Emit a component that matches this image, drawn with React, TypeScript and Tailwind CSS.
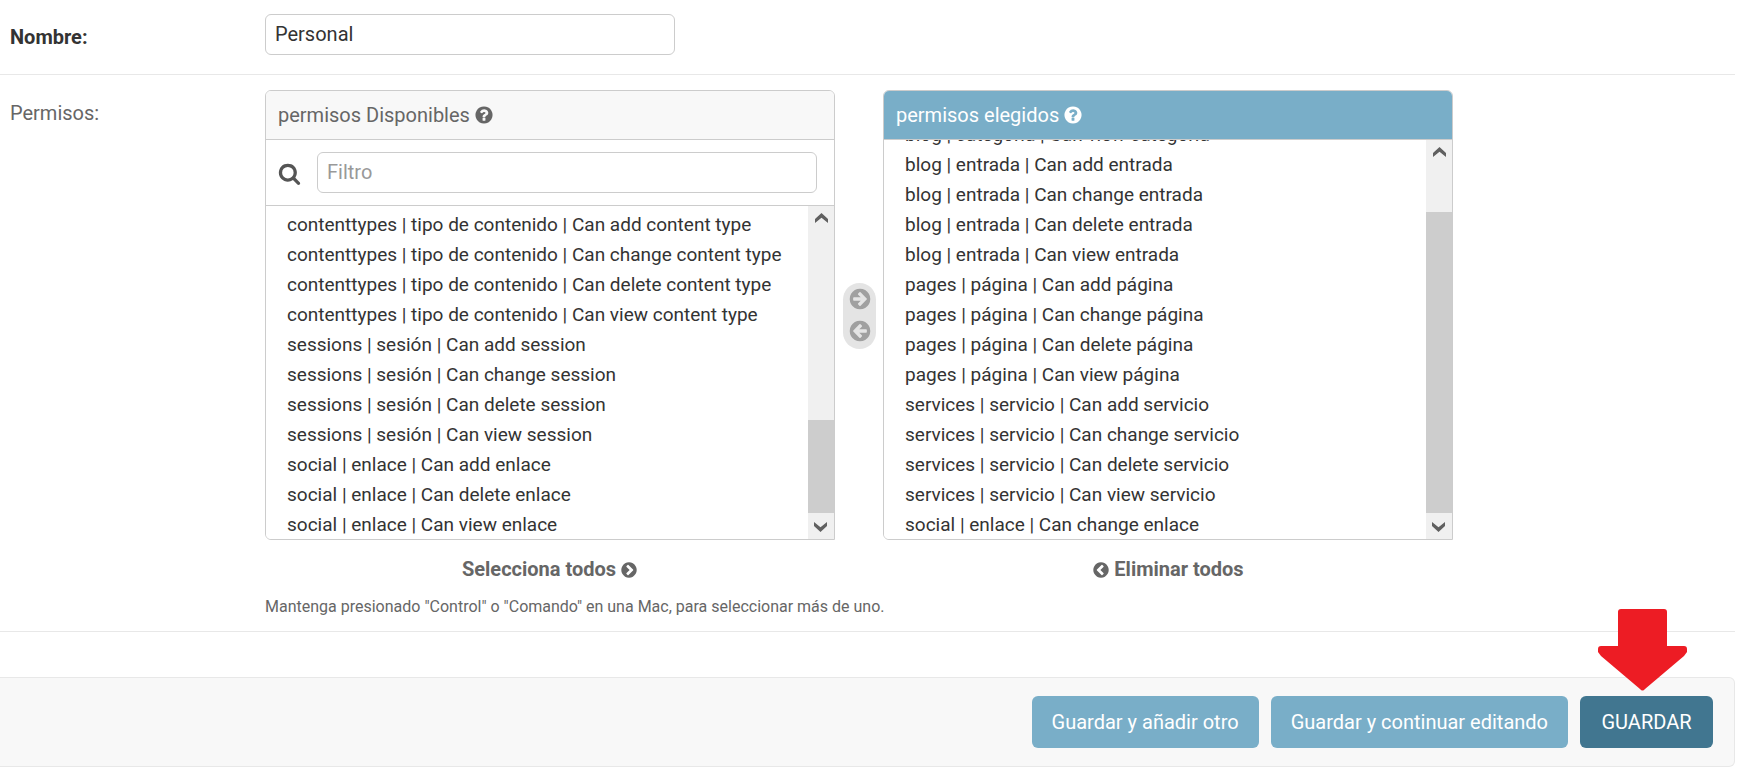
import { useLayoutEffect, useRef } from 'react';

const DISC =
  'q0 209-103 385.5t-279.5 279.5-385.5 103-385.5-103-279.5-279.5-103-385.5 103-385.5 279.5-279.5 385.5-103 385.5 103 279.5 279.5 103 385.5z';

const PATHS = {
  help:
    'M1024 1376v-192q0-14-9-23t-23-9h-192q-14 0-23 9t-9 23v192q0 14 9 23t23 9h192q14 0 23-9t9-23zm256-672q0-88-55.5-163t-138.5-116-170-41q-243 0-371 213-15 24 8 42l132 100q7 6 19 6 16 0 25-12 53-68 86-92 34-24 86-24 48 0 85.5 26t37.5 59q0 38-20 61t-68 45q-63 28-115.5 86.5t-52.5 125.5v36q0 14 9 23t23 9h192q14 0 23-9t9-23q0-19 21.5-49.5t54.5-49.5q32-18 49-28.5t46-35 44.5-48 28-60.5 12.5-81zm384 192' +
    DISC,
  chevron:
    'M845 1395l454-454q19-19 19-45t-19-45l-454-454q-19-19-45-19t-45 19l-102 102q-19 19-19 45t19 45l307 307-307 307q-19 19-19 45t19 45l102 102q19 19 45 19t45-19zm819-499' +
    DISC,
  arrow:
    'M1413 896q0-27-18-45l-91-91-362-362q-18-18-45-18t-45 18l-91 91q-18 18-18 45t18 45l189 189h-502q-26 0-45 19t-19 45v128q0 26 19 45t45 19h502l-189 189q-19 19-19 45t19 45l91 91q18 18 45 18t45-18l362-362 91-91q18-18 18-45zm251 0' +
    DISC,
  search:
    'M1216 832q0-185-131.5-316.5t-316.5-131.5-316.5 131.5-131.5 316.5 131.5 316.5 316.5 131.5 316.5-131.5 131.5-316.5zm512 832q0 52-38 90t-90 38q-54 0-90-38l-343-342q-179 124-399 124-143 0-273.5-55.5t-225-150-150-225-55.5-273.5 55.5-273.5 150-225 225-150 273.5-55.5 273.5 55.5 225 150 150 225 55.5 273.5q0 220-124 399l343 343q37 37 37 90z',
};

function Icon({ name, className }: { name: keyof typeof PATHS; className: string }) {
  return (
    <svg viewBox="0 0 1792 1792" fill="currentColor" aria-hidden="true" className={className}>
      <path d={PATHS[name]} />
    </svg>
  );
}

const available = [
  'contenttypes | tipo de contenido | Can add content type',
  'contenttypes | tipo de contenido | Can change content type',
  'contenttypes | tipo de contenido | Can delete content type',
  'contenttypes | tipo de contenido | Can view content type',
  'sessions | sesión | Can add session',
  'sessions | sesión | Can change session',
  'sessions | sesión | Can delete session',
  'sessions | sesión | Can view session',
  'social | enlace | Can add enlace',
  'social | enlace | Can delete enlace',
  'social | enlace | Can view enlace',
];

const chosen = [
  'blog | categoría | Can view categoría',
  'blog | entrada | Can add entrada',
  'blog | entrada | Can change entrada',
  'blog | entrada | Can delete entrada',
  'blog | entrada | Can view entrada',
  'pages | página | Can add página',
  'pages | página | Can change página',
  'pages | página | Can delete página',
  'pages | página | Can view página',
  'services | servicio | Can add servicio',
  'services | servicio | Can change servicio',
  'services | servicio | Can delete servicio',
  'services | servicio | Can view servicio',
  'social | enlace | Can change enlace',
];

function ScrollChevron({ className }: { className?: string }) {
  return (
    <div className={`flex h-[26px] shrink-0 items-center justify-center pb-0.5 ${className ?? ''}`}>
      <svg viewBox="0 0 13 10" fill="#606060" className="h-2.5 w-[13px]" aria-hidden="true">
        <path d="M0 6 6.500 0 13 6V10L6.500 4.700 0 10Z" />
      </svg>
    </div>
  );
}

function OptionList({ label, items, thumb }: { label: string; items: string[]; thumb: string }) {
  const ref = useRef<HTMLSelectElement>(null);
  useLayoutEffect(() => {
    if (ref.current) ref.current.scrollTop = ref.current.scrollHeight;
  }, []);
  return (
    <div className="flex min-h-0 flex-1 items-stretch">
      <select
        ref={ref}
        multiple
        aria-label={label}
        className="block min-w-0 flex-1 appearance-none overflow-y-auto border-0 bg-white p-0 pt-[3px] text-[19px] text-[#333] outline-none [scrollbar-width:none]"
      >
        {items.map((item) => (
          <option key={item} className="block h-[30px] min-h-[30px] px-[21px] pt-1 pb-0">
            {item}
          </option>
        ))}
      </select>
      <div className="flex w-[26px] shrink-0 flex-col bg-[#f0f0f0]">
        <ScrollChevron />
        <div className="flex flex-1 flex-col justify-end">
          <div className={`bg-[#cdcdcd] ${thumb}`} />
        </div>
        <ScrollChevron className="rotate-180" />
      </div>
    </div>
  );
}

const panel = 'flex h-[450px] flex-col overflow-hidden rounded-t-md rounded-bl-md border border-[#ccc]';
const heading = 'flex h-[49px] shrink-0 items-center gap-1 border-b border-[#ccc] px-3 text-[20px]';
const field =
  'h-[41px] rounded-md border border-[#ccc] bg-white px-[9px] pb-0.5 text-[20px] text-[#333] outline-none placeholder:text-[#999]';
const bulk = 'mt-4 flex h-[26px] items-center gap-1 self-center text-[20px] font-bold text-[#666]';
const button = 'h-[52px] min-w-[133px] rounded-md px-5 text-[20px] text-white';

export default function App() {
  return (
    <form className="bg-white pr-[21px] font-['Roboto',sans-serif] text-[20px] text-[#333]" onSubmit={(e) => e.preventDefault()}>
      <div className="flex items-start border-b border-[#e8e8e8] pt-3.5 pb-[19px] pl-2.5">
        <label htmlFor="nombre" className="w-[255px] shrink-0 pt-2 leading-[30px] font-bold">
          Nombre:
        </label>
        <input id="nombre" type="text" defaultValue="Personal" className={`${field} w-[410px]`} />
      </div>

      <div className="flex items-start border-b border-[#e8e8e8] pt-[15px] pb-3 pl-2.5">
        <div className="w-[255px] shrink-0 pt-2 leading-[30px] text-[#666]">Permisos:</div>
        <div>
          <div className="flex items-start">
            <section className="flex w-[570px] flex-col">
              <div className={panel}>
                <h2 className={`${heading} bg-[#f8f8f8] text-[#666]`}>
                  permisos Disponibles
                  <Icon name="help" className="size-5" />
                </h2>
                <div className="flex h-[66px] shrink-0 items-center border-b border-[#ccc] pr-[17px] pl-3">
                  <label htmlFor="filtro" className="w-[39px] shrink-0 pt-0.5 text-[#555]">
                    <Icon name="search" className="size-[23px]" />
                  </label>
                  <input id="filtro" type="text" placeholder="Filtro" className={`${field} min-w-0 flex-1`} />
                </div>
                <OptionList label="permisos Disponibles" items={available} thumb="h-[93px]" />
              </div>
              <button type="button" className={bulk}>
                Selecciona todos
                <Icon name="chevron" className="mt-0.5 size-[18px]" />
              </button>
            </section>

            <div className="flex w-12 shrink-0 justify-end pt-[193px] pr-[7px]">
              <div className="flex h-[66px] w-[33px] flex-col items-center justify-around rounded-full bg-[#e4e4e4] pb-0.5 text-[#a0a0a0]">
                <button type="button" aria-label="Elegir">
                  <Icon name="arrow" className="size-6" />
                </button>
                <button type="button" aria-label="Eliminar">
                  <Icon name="arrow" className="size-6 rotate-180" />
                </button>
              </div>
            </div>

            <section className="flex w-[570px] flex-col">
              <div className={panel}>
                <h2 className={`${heading} bg-[#79aec8] text-white`}>
                  permisos elegidos
                  <Icon name="help" className="size-5" />
                </h2>
                <OptionList label="permisos elegidos" items={chosen} thumb="h-[301px]" />
              </div>
              <button type="button" className={bulk}>
                <Icon name="chevron" className="mt-0.5 size-[18px] rotate-180" />
                Eliminar todos
              </button>
            </section>
          </div>
          <p className="mt-3 leading-[25px] text-[16px] text-[#666]">
            Mantenga presionado "Control" o "Comando" en una Mac, para seleccionar más de uno.
          </p>
        </div>
      </div>

      <div className="mt-[45px] flex justify-end gap-3 rounded-r-md border border-l-0 border-[#e8e8e8] bg-[#f8f8f8] py-[18px] pr-[21px]">
        <button type="button" className={`${button} bg-[#79aec8]`}>
          Guardar y añadir otro
        </button>
        <button type="button" className={`${button} bg-[#79aec8]`}>
          Guardar y continuar editando
        </button>
        <div className="relative">
          <button type="submit" className={`${button} bg-[#417690]`}>
            GUARDAR
          </button>
          <svg
            viewBox="0 0 89 82"
            fill="#ed1c24"
            aria-hidden="true"
            className="pointer-events-none absolute -top-[87px] left-[18px] h-[82px] w-[89px]"
          >
            <path d="M23 0H66Q69 0 69 3V37H86Q89 37 89 40V43L86 47 47 80Q44.500 83 42 80L3 47 0 43V40Q0 37 3 37H20V3Q20 0 23 0Z" />
          </svg>
        </div>
      </div>
    </form>
  );
}
